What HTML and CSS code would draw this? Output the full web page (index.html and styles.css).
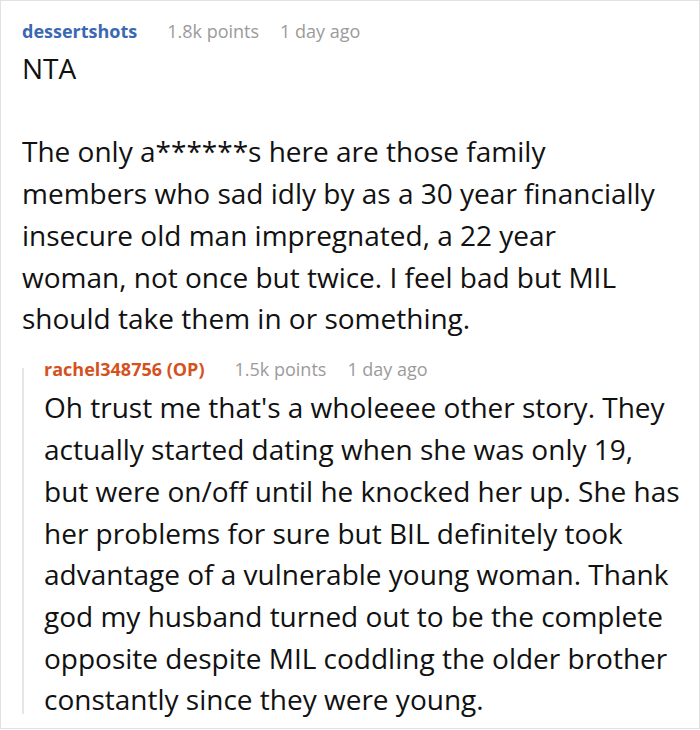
FILE: index.html
```html
<!DOCTYPE html>
<html>
<head>
<meta charset="utf-8">
<link rel="stylesheet" href="styles.css">
</head>
<body>
<div class="frame">
  <div class="comment">
    <div class="meta">
      <span class="user">dessertshots</span>
      <span class="info">1.8k points</span>
      <span class="info">1 day ago</span>
    </div>
    <div class="text main">NTA<br><br>The only a******s here are those family members who sad idly by as a 30 year financially insecure old man impregnated, a 22 year woman, not once but twice. I feel bad but MIL should take them in or something.</div>
    <div class="reply">
      <div class="meta">
        <span class="user op">rachel348756 (OP)</span>
        <span class="info">1.5k points</span>
        <span class="info">1 day ago</span>
      </div>
      <div class="text">Oh trust me that's a wholeeee other story. They actually started dating when she was only 19, but were on/off until he knocked her up. She has her problems for sure but BIL definitely took advantage of a vulnerable young woman. Thank god my husband turned out to be the complete opposite despite MIL coddling the older brother constantly since they were young.</div>
    </div>
  </div>
</div>
</body>
</html>
```
FILE: styles.css
```css
html, body {
  margin: 0;
  padding: 0;
  background: #fff;
}
.frame {
  box-sizing: border-box;
  width: 700px;
  height: 729px;
  border: 1px solid #e2e2e2;
  background: #fff;
  overflow: hidden;
  font-family: "Open Sans", "Noto Sans", sans-serif;
}
.comment {
  padding: 16px 18px 0 21px;
}
.meta {
  display: flex;
  gap: 21px;
  font-size: 18px;
  line-height: 28px;
}
.user {
  font-weight: bold;
  color: #3b68b2;
  margin-right: 9px;
}
.user.op {
  color: #d4521e;
}
.info {
  color: #9b9b9b;
}
.text {
  font-size: 28px;
  line-height: 41.7px;
  color: #111;
  margin-top: 3px;
}
.text.main {
  margin-right: 20px;
}
.reply {
  position: relative;
  margin-top: 15px;
  padding-left: 22px;
}
.reply::before {
  content: "";
  position: absolute;
  left: 0;
  top: 13px;
  bottom: 7px;
  width: 2px;
  background: #e6e6e6;
}
.reply .text {
  margin-top: 4.5px;
}
```
